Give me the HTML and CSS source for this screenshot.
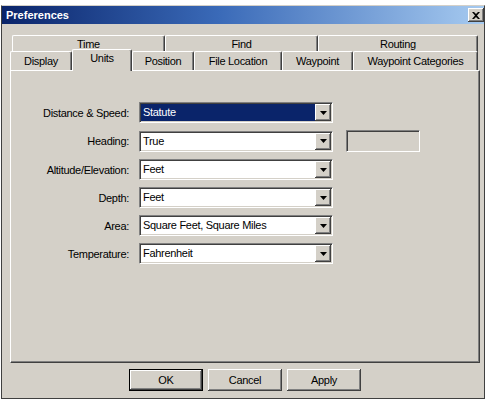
FILE: index.html
```html
<!DOCTYPE html>
<html lang="en">
<head>
    <meta charset="UTF-8">
    <title>Preferences</title>
    <link rel="stylesheet" href="styles.css">
</head>
<body>
    <div class="window">
        <div class="titlebar">
            <span class="title">Preferences</span>
            <span class="close-btn">
                <svg width="8" height="7" viewBox="0 0 8 7"><path d="M0 0h2l2 2 2-2h2L5 3.5 8 7H6L4 5 2 7H0l3-3.5z" fill="#000"/></svg>
            </span>
        </div>
        <div class="content">
            <div class="tab-row back">
                <div class="tab tab-time">Time</div>
                <div class="tab tab-find">Find</div>
                <div class="tab tab-routing">Routing</div>
            </div>
            <div class="tab-row front">
                <div class="tab tab-display">Display</div>
                <div class="tab tab-units active">Units</div>
                <div class="tab tab-position">Position</div>
                <div class="tab tab-file">File Location</div>
                <div class="tab tab-waypoint">Waypoint</div>
                <div class="tab tab-categories">Waypoint Categories</div>
            </div>
            <div class="panel">
                <div class="form">
                    <label>Distance &amp; Speed:</label>
                    <div class="combo focused"><span class="value">Statute</span><span class="drop"><svg width="7" height="4" viewBox="0 0 7 4"><path d="M0 0h7L3.5 4z" fill="#000"/></svg></span></div>
                    <div></div>

                    <label>Heading:</label>
                    <div class="combo"><span class="value">True</span><span class="drop"><svg width="7" height="4" viewBox="0 0 7 4"><path d="M0 0h7L3.5 4z" fill="#000"/></svg></span></div>
                    <div class="edit-box"></div>

                    <label>Altitude/Elevation:</label>
                    <div class="combo"><span class="value">Feet</span><span class="drop"><svg width="7" height="4" viewBox="0 0 7 4"><path d="M0 0h7L3.5 4z" fill="#000"/></svg></span></div>
                    <div></div>

                    <label>Depth:</label>
                    <div class="combo"><span class="value">Feet</span><span class="drop"><svg width="7" height="4" viewBox="0 0 7 4"><path d="M0 0h7L3.5 4z" fill="#000"/></svg></span></div>
                    <div></div>

                    <label>Area:</label>
                    <div class="combo"><span class="value">Square Feet, Square Miles</span><span class="drop"><svg width="7" height="4" viewBox="0 0 7 4"><path d="M0 0h7L3.5 4z" fill="#000"/></svg></span></div>
                    <div></div>

                    <label>Temperature:</label>
                    <div class="combo"><span class="value">Fahrenheit</span><span class="drop"><svg width="7" height="4" viewBox="0 0 7 4"><path d="M0 0h7L3.5 4z" fill="#000"/></svg></span></div>
                    <div></div>
                </div>
            </div>
            <div class="buttons">
                <button class="default">OK</button>
                <button>Cancel</button>
                <button>Apply</button>
            </div>
        </div>
    </div>
</body>
</html>
```

FILE: styles.css
```css
* { box-sizing: border-box; }

body {
    margin: 0;
    background: #fff;
    font-family: "Liberation Sans", Arial, sans-serif;
    font-size: 11px;
    letter-spacing: -0.3px;
    color: #000;
}

.window {
    margin: 5px 0 0 1px;
    width: 484px;
    height: 394px;
    background: #d4d0c8;
    border: 1px solid #404040;
    border-top-color: #d4d0c8;
}

.titlebar {
    height: 18px;
    display: flex;
    align-items: center;
    justify-content: space-between;
    padding-left: 4px;
    background: linear-gradient(to right, #0a246a, #3a6ab8 45%, #a6caf0);
}
.title {
    color: #fff;
    font-weight: bold;
    letter-spacing: 0;
}
.close-btn {
    width: 16px;
    height: 14px;
    display: flex;
    align-items: center;
    justify-content: center;
    background: #d4d0c8;
    box-shadow: inset -1px -1px #404040, inset 1px 1px #fff, inset -2px -2px #808080;
}

.content {
    padding: 11px 4px 7px 8px;
}

.tab-row { display: flex; align-items: flex-start; }
.tab-row.back { height: 16px; margin-left: 2px; }
.tab-row.front { height: 19px; }

.tab {
    background: #d4d0c8;
    border-top: 1px solid #fff;
    border-left: 1px solid #fff;
    border-right: 1px solid #404040;
    box-shadow: inset -1px 0 #808080;
    border-radius: 2px 2px 0 0;
    text-align: center;
}
.back .tab { height: 18px; padding-top: 2px; }
.front .tab { height: 19px; padding-top: 3px; }
.front .tab.active {
    position: relative;
    z-index: 1;
    height: 22px;
    margin-top: -2px;
    padding-top: 2px;
}

.tab-time { width: 153px; }
.tab-find { width: 153px; }
.tab-routing { width: 160px; }
.tab-display { width: 62px; }
.tab-units { width: 60px; }
.tab-position { width: 62px; }
.tab-file { width: 88px; }
.tab-waypoint { width: 71px; }
.tab-categories { width: 125px; }

.panel {
    width: 470px;
    height: 293px;
    border-top: 1px solid #fff;
    border-left: 1px solid #fff;
    border-right: 1px solid #404040;
    border-bottom: 1px solid #404040;
    box-shadow: inset -1px -1px #808080;
    padding-top: 31px;
}

.form {
    display: grid;
    grid-template-columns: 118px 194px 77px;
    column-gap: 10px;
    row-gap: 7px;
    align-items: center;
}
.form label { text-align: right; }

.combo {
    height: 21px;
    display: flex;
    padding: 1px;
    background: #fff;
    border-top: 1px solid #808080;
    border-left: 1px solid #808080;
    border-right: 1px solid #fff;
    border-bottom: 1px solid #fff;
    box-shadow: inset 1px 1px #404040, inset -1px -1px #d4d0c8;
}
.combo .value {
    flex: 1;
    line-height: 17px;
    padding-left: 2px;
    white-space: nowrap;
}
.combo.focused .value {
    background: #0a246a;
    color: #fff;
}
.drop {
    width: 16px;
    height: 17px;
    display: flex;
    align-items: center;
    justify-content: center;
    background: #d4d0c8;
    box-shadow: inset -1px -1px #404040, inset 1px 1px #fff, inset -2px -2px #808080;
}

.edit-box {
    margin-left: 3px;
    width: 74px;
    height: 22px;
    border-top: 1px solid #808080;
    border-left: 1px solid #808080;
    border-right: 1px solid #fff;
    border-bottom: 1px solid #fff;
    box-shadow: inset 1px 1px #404040, inset -1px -1px #d4d0c8;
}

.buttons {
    display: flex;
    justify-content: center;
    gap: 5px;
    margin-top: 6px;
    width: 470px;
}
.buttons button {
    width: 74px;
    height: 22px;
    font-family: inherit;
    font-size: 11px;
    letter-spacing: -0.3px;
    color: #000;
    background: #d4d0c8;
    border: none;
    box-shadow: inset -1px -1px #404040, inset 1px 1px #fff, inset -2px -2px #808080;
    padding: 0;
}
.buttons button.default {
    border: 1px solid #000;
    box-shadow: inset -1px -1px #404040, inset 1px 1px #fff, inset -2px -2px #808080;
}
```
